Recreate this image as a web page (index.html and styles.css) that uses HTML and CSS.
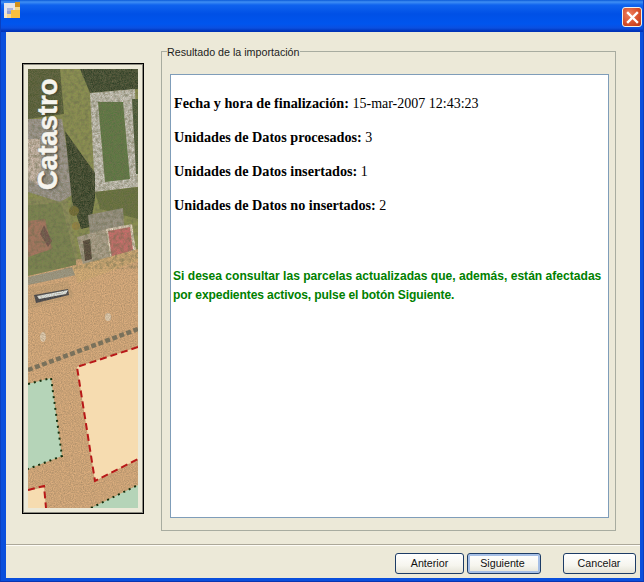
FILE: index.html
```html
<!DOCTYPE html>
<html lang="es">
<head>
<meta charset="utf-8">
<title>Resultado de la importación</title>
<link rel="stylesheet" href="styles.css">
</head>
<body>
<div class="window">
  <header class="titlebar">
    <svg class="app-icon" width="16" height="16" viewBox="0 0 16 16">
      <rect width="11" height="11" x="0" y="1" fill="#e4e4ea"/>
      <rect x="11" y="0" width="5" height="5" fill="#d0901c"/>
      <rect x="3" y="6" width="6" height="3" fill="#a8b4e0"/>
      <rect x="3" y="9" width="4" height="3" fill="#8f9fd8"/>
      <rect x="0" y="11" width="3" height="5" fill="#f4e6c8"/>
      <rect x="3" y="12" width="4" height="4" fill="#f8d890"/>
      <rect x="7" y="8" width="9" height="8" fill="#f8c040"/>
      <rect x="11" y="5" width="5" height="3" fill="#f4d890"/>
    </svg>
    <button class="close" aria-label="Cerrar">
      <svg width="13" height="13" viewBox="0 0 13 13"><path d="M2 2 L11 11 M11 2 L2 11" stroke="#fff" stroke-width="2.4" stroke-linecap="square"/></svg>
    </button>
  </header>
  <div class="client">
    <main class="main">
      <div class="picture">
        <svg class="aerial" width="110" height="439" viewBox="0 0 110 439">
          <defs>
            <filter id="grain" x="0" y="0" width="100%" height="100%">
              <feTurbulence type="fractalNoise" baseFrequency="0.9" numOctaves="2" seed="4" result="n"/>
              <feColorMatrix in="n" type="matrix" values="0 0 0 0 0.25  0 0 0 0 0.18  0 0 0 0 0.1  0.9 0 0 0 -0.22"/>
              <feComposite in2="SourceGraphic" operator="in"/>
            </filter>
            <filter id="mottle" x="0" y="0" width="100%" height="100%">
              <feTurbulence type="fractalNoise" baseFrequency="0.28" numOctaves="3" seed="9" result="n"/>
              <feColorMatrix in="n" type="matrix" values="0 0 0 0 0.1  0 0 0 0 0.13  0 0 0 0 0.06  1.2 0 0 0 -0.45"/>
              <feComposite in2="SourceGraphic" operator="in"/>
            </filter>
            <filter id="soft"><feGaussianBlur stdDeviation="0.6"/></filter>
            <filter id="shadow" x="-20%" y="-20%" width="140%" height="140%"><feGaussianBlur stdDeviation="1"/></filter>
          </defs>
          <g filter="url(#soft)">
            <rect width="110" height="439" fill="#dcae7e"/>
            <!-- garden -->
            <rect width="110" height="190" fill="#8a9450"/>
            <polygon points="0,0 32,0 36,45 0,50" fill="#4e5a30"/>
            <polygon points="52,0 110,0 110,20 62,24" fill="#2f4026"/>
            <polygon points="0,130 38,128 50,190 0,200" fill="#8a9058"/>
            <!-- pool -->
            <polygon points="62,24 107,20 110,118 67,123" fill="#d0d0c8"/>
            <polygon points="70,33 95,33 102,110 77,113" fill="#57783f"/>
            <polygon points="104,30 110,30 110,105 108,105" fill="#3c5230"/>
            <polygon points="67,123 110,118 110,150 72,140" fill="#5f7038"/>
            <!-- roof -->
            <polygon points="0,50 34,50 46,125 32,133 0,123" fill="#a09c98"/>
            <polygon points="0,70 12,70 14,118 0,110" fill="#d0c0b4"/>
            <!-- shadow -->
            <polygon points="37,62 67,104 67,130 62,158 53,160 44,132" fill="#2b3a22"/>
            <circle cx="46" cy="142" r="5" fill="#6e6a2c"/>
            <circle cx="48" cy="157" r="4" fill="#96863c"/>
            <!-- court -->
            <polygon points="0,136 33,134 48,192 48,196 0,208" fill="#77864e"/>
            <polygon points="0,152 17,150 24,180 0,188" fill="#a87460"/>
            <polygon points="16,156 24,172 20,178 12,165" fill="#6d5048" />
            <!-- building -->
            <polygon points="60,146 95,139 96,158 62,166" fill="#9a978a"/>
            <polygon points="49,168 78,160 83,192 55,196" fill="#b0a794"/>
            <polygon points="78,160 104,155 108,182 83,192" fill="#f2e2d0"/>
            <polygon points="80,162 102,158 105,181 84,189" fill="#cc6c6c"/>
            <polygon points="55,172 62,170 64,190 57,192" fill="#4b4034"/>
            <!-- road -->
            <polygon points="0,207 48,196 55,200 110,182 110,300 0,320" fill="#dcae7e"/>
            <polygon points="0,208 45,198 48,206 0,216" fill="#9c9a86"/>
            <polygon points="44,198 110,180 110,192 50,214" fill="#d8b078"/>
            <polygon points="0,219 40,212 46,228 0,240" fill="#cea678"/>
            <!-- car -->
            <polygon points="6,226 40,220 41,226 8,234" fill="#3c4048"/>
            <polygon points="9,227 40,221 38,225 11,230" fill="#e4ecec"/>
            <ellipse cx="80" cy="248" rx="3" ry="4" fill="#e6d2b6"/>
            <ellipse cx="15" cy="268" rx="3" ry="5" fill="#e6d2b6"/>
            <!-- hedge -->
            <path d="M0 301 L110 260" stroke="#74705c" stroke-width="4.5" stroke-dasharray="5 2.5" fill="none"/>
          </g>
          <rect width="110" height="200" fill="#fff" filter="url(#mottle)"/>
          <rect width="110" height="439" fill="#fff" filter="url(#grain)"/>
          <!-- parcels -->
          <polygon points="49,298 110,278 110,390 67,412" fill="#f6dcb0"/>
          <polygon points="0,315 23,309 34,387 0,400" fill="#b5d4b8"/>
          <polygon points="63,439 110,416 110,439" fill="#b5d4b8"/>
          <polygon points="0,422 16,418 18,439 0,439" fill="#f6dcb0"/>
          <g fill="none" stroke="#b81818" stroke-width="2" stroke-dasharray="7 4">
            <path d="M110 278 L49 298 L67 412 L110 390"/>
            <path d="M0 421 L16 417 L18 439"/>
          </g>
          <g fill="none" stroke="#14300f" stroke-width="2" stroke-dasharray="2 4">
            <path d="M0 315 L23 309 L34 387 L0 400"/>
            <path d="M63 439 L110 416"/>
          </g>
          <text class="brand-shadow" transform="translate(31 122) rotate(-90)" filter="url(#shadow)">Catastro</text>
          <text class="brand" transform="translate(29 121) rotate(-90)">Catastro</text>
        </svg>
      </div>
      <fieldset class="group">
        <legend class="group-title">Resultado de la importación</legend>
        <div class="panel">
          <p class="row"><b class="label">Fecha y hora de finalización:</b> 15-mar-2007 12:43:23</p>
          <p class="row"><b class="label">Unidades de Datos procesados:</b> 3</p>
          <p class="row"><b class="label">Unidades de Datos insertados:</b> 1</p>
          <p class="row"><b class="label">Unidades de Datos no insertados:</b> 2</p>
          <p class="notice">Si desea consultar las parcelas actualizadas que, además, están afectadas por expedientes activos, pulse el botón Siguiente.</p>
        </div>
      </fieldset>
    </main>
    <footer class="actions">
      <button class="btn btn-prev">Anterior</button>
      <button class="btn btn-next">Siguiente</button>
      <button class="btn btn-cancel">Cancelar</button>
    </footer>
  </div>
</div>
</body>
</html>
```
FILE: styles.css
```css
* { box-sizing: border-box; }
html, body { margin: 0; padding: 0; }
body { width: 644px; height: 582px; overflow: hidden; font-family: "Liberation Sans", Arial, sans-serif; }

.window {
  width: 644px;
  height: 582px;
  display: flex;
  flex-direction: column;
  background: #0a4fdc;
  border-left: 1px solid #0a3fc0;
  border-right: 1px solid #0a3fc0;
  border-bottom: 1px solid #0a35b0;
}

.titlebar {
  height: 32px;
  flex: none;
  display: flex;
  align-items: flex-start;
  justify-content: space-between;
  padding: 2px 1px 0 3px;
  background: linear-gradient(180deg, #0a5ad8 0, #3f8ff4 2px, #0f63ee 5px, #0050e6 14px, #0055ee 24px, #0a4fe0 28px, #0033b8 31px);
}
.app-icon { display: block; }

.close {
  width: 20px;
  height: 20px;
  margin-top: 5px;
  padding: 0;
  display: flex;
  align-items: center;
  justify-content: center;
  border: 1px solid #f4f0e8;
  border-radius: 3px;
  background: radial-gradient(circle at 35% 35%, #f08060 0, #d8502c 55%, #b83412 100%);
}

.client {
  flex: 1;
  margin: 0 3px 3px 5px;
  display: flex;
  flex-direction: column;
  background: #ece9d8;
}

.main {
  height: 513px;
  flex: none;
  display: flex;
  align-items: flex-start;
  padding: 0 23px 0 16px;
  border-bottom: 1px solid #aca899;
}

.picture {
  flex: none;
  width: 122px;
  height: 451px;
  margin-top: 31px;
  padding: 5px;
  border: 1px solid #000;
  box-shadow: inset 0 0 0 1px rgba(0, 0, 0, 0.4);
}
.aerial { display: block; }

.brand, .brand-shadow {
  font-family: "Liberation Sans", Arial, sans-serif;
  font-weight: 700;
  font-size: 27.5px;
}
.brand { fill: #f6f4ee; stroke: #f6f4ee; stroke-width: 0.5px; }
.brand-shadow { fill: #2a2a22; opacity: 0.6; }

.group {
  flex: none;
  width: 455px;
  height: 487px;
  margin: 12px 0 0 17px;
  padding: 15px 6px 11px 8px;
  border: 1px solid #a8aca0;
  min-width: 0;
}
.group-title {
  margin-left: -3px;
  padding: 2px 1px 0 0;
  font-size: 10.7px;
  line-height: 13px;
  color: #1c1c1c;
}

.panel {
  width: 439px;
  height: 444px;
  padding: 20px 2px 0 2px;
  background: #fff;
  border: 1px solid #7f9db9;
}

.row {
  margin: 0 0 17px;
  padding-left: 1px;
  height: 17px;
  font-family: "Liberation Serif", "Times New Roman", serif;
  font-size: 14px;
  line-height: 17px;
  color: #000;
}
.label { font-size: 14.2px; }

.notice {
  margin: 53px 0 0;
  font-size: 12.08px;
  line-height: 19px;
  font-weight: 700;
  color: #008000;
  letter-spacing: -0.12px;
}
.notice::first-line { letter-spacing: 0; }

.actions {
  flex: 1;
  display: flex;
  align-items: flex-start;
  padding: 7px 4px 0 389px;
  border-top: 1px solid #fdfcf6;
}

.btn {
  height: 21px;
  padding: 0 0 1px;
  font-family: "Liberation Sans", Arial, sans-serif;
  font-size: 10.7px;
  color: #111;
  border: 1px solid #1d3c66;
  border-radius: 3px;
  background: linear-gradient(180deg, #ffffff 0, #f6f5ee 60%, #e4e2d6 100%);
}
.btn-prev { width: 69px; }
.btn-next {
  width: 74px;
  margin-left: 3px;
  padding-right: 3px;
  box-shadow: inset 0 0 0 2px #a6bfe6;
}
.btn-cancel { width: 73px; margin-left: 22px; padding-right: 1px; }
```
